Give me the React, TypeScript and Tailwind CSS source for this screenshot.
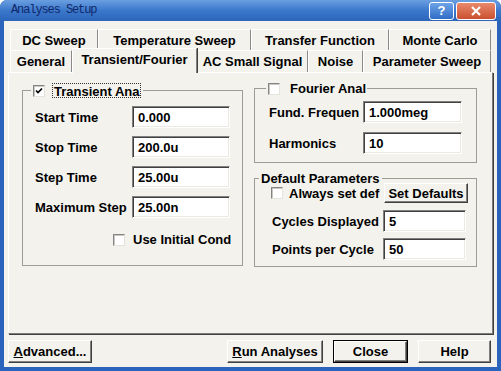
import React from 'react';

// Classic "Analyses Setup" dialog with the Transient/Fourier tab open

const FONT = "font-['Liberation_Sans',Arial,sans-serif]";

function Check({ checked = false }: { checked?: boolean }) {
  return (
    <span className="inline-flex w-[12px] h-[12px] shrink-0 items-center justify-center bg-white border border-t-[#858585] border-l-[#858585] border-r-[#e4e3dc] border-b-[#e4e3dc] shadow-[inset_1px_1px_0_#c9c8c0]">
      {checked && (
        <svg width="8" height="8" viewBox="0 0 8 8">
          <path d="M1 3.5 L3 5.5 L7 1.5" stroke="#000" strokeWidth="1.7" fill="none" />
        </svg>
      )}
    </span>
  );
}

function Field({ value, w }: { value: string; w: string }) {
  return (
    <div
      className={`${w} h-[22px] shrink-0 flex items-center pl-[5px] bg-white border border-t-[#808080] border-l-[#808080] border-r-white border-b-white shadow-[inset_1px_1px_0_#404040,inset_-1px_-1px_0_#ebe9e0]`}
    >
      {value}
    </div>
  );
}

function Row({ label, value, labelW, fieldW }: { label: string; value: string; labelW: string; fieldW: string }) {
  return (
    <div className="flex items-center">
      <div className={`${labelW} shrink-0 overflow-hidden whitespace-nowrap`}>{label}</div>
      <Field value={value} w={fieldW} />
    </div>
  );
}

function Btn({ children, w, isDefault = false }: { children: React.ReactNode; w: string; isDefault?: boolean }) {
  return (
    <div className={`${w} h-[23px] shrink-0 ${isDefault ? 'border border-black' : ''}`}>
      <div className="w-full h-full flex items-center justify-center border border-t-white border-l-white border-r-[#404040] border-b-[#404040] shadow-[inset_-1px_-1px_0_#808080]">
        {children}
      </div>
    </div>
  );
}

function Tab({ label, w, h = 'h-[21px]' }: { label: string; w: string; h?: string }) {
  return (
    <div
      className={`${w} ${h} shrink-0 flex items-center justify-center border-t border-l border-white border-r border-r-[#8a8a8a] whitespace-nowrap`}
    >
      {label}
    </div>
  );
}

function TitleBar() {
  return (
    <div className="h-[21px] shrink-0 flex items-center rounded-t-[7px] bg-gradient-to-b from-[#6a9fe0] via-[#3b78cc] to-[#2c65ba]">
      <span className="pl-[11px] font-['Liberation_Mono',monospace] text-[12px] tracking-[-1.1px] text-[#10296b] font-normal">
        Analyses Setup
      </span>
      <div className="ml-auto mr-[5px] flex gap-[2px]">
        <div className="w-[25px] h-[18px] rounded-[3px] border border-white flex items-center justify-center bg-gradient-to-b from-[#6ea3e6] to-[#2f6cc6] text-white text-[13px] font-bold leading-none">
          ?
        </div>
        <div className="w-[40px] h-[18px] rounded-[3px] border border-white flex items-center justify-center bg-gradient-to-b from-[#e9896c] to-[#c9502e]">
          <svg width="12" height="10" viewBox="0 0 12 10">
            <path d="M2 1 L10 9 M10 1 L2 9" stroke="#fff" strokeWidth="2.2" />
          </svg>
        </div>
      </div>
    </div>
  );
}

export default function App() {
  return (
    <div className={`w-[501px] h-[371px] bg-[#2a63bb] rounded-t-[7px] flex flex-col ${FONT} text-[13px] font-bold text-black leading-[15px]`}>
      <TitleBar />
      <div className="flex-1 mx-[4px] mb-[4px] bg-[#f3f2ed] flex flex-col">
        {/* back row of tabs */}
        <div className="ml-[6px] mt-[8px] flex">
          <Tab label="DC Sweep" w="w-[88px]" />
          <Tab label="Temperature Sweep" w="w-[153px]" />
          <Tab label="Transfer Function" w="w-[138px]" />
          <Tab label="Monte Carlo" w="w-[102px]" />
        </div>
        {/* front row of tabs */}
        <div className="ml-[6px] h-[22px] flex items-end">
          <Tab label="General" w="w-[62px]" h="h-[22px]" />
          <div className="relative z-10 w-[125px] h-[25px] -mb-px shrink-0 flex justify-center pt-[3px] bg-[#f3f2ed] border-t border-l border-white border-r border-r-[#808080] shadow-[1px_0_0_#404040]">
            Transient/Fourier
          </div>
          <Tab label="AC Small Signal" w="w-[111px]" h="h-[22px]" />
          <Tab label="Noise" w="w-[55px]" h="h-[22px]" />
          <Tab label="Parameter Sweep" w="w-[128px]" h="h-[22px]" />
        </div>

        {/* tab page */}
        <div className="mx-[4px] h-[262px] shrink-0 flex gap-[11px] pl-[13px] border border-t-white border-l-white border-r-[#7c7c7c] border-b-[#7c7c7c] shadow-[1px_1px_0_#404040]">
          {/* Transient analysis */}
          <div className="relative mt-[17px] w-[221px] h-[176px] border border-[#9c9c96]">
            <div className="absolute -top-[8px] left-[8px] px-[2px] flex items-center gap-[7px] bg-[#f3f2ed]">
              <Check checked />
              <span className="h-[15px] px-[1px] border border-dotted border-[#333]">Transient Ana</span>
            </div>
            <div className="pt-[15px] pl-[12px] flex flex-col gap-[8px]">
              <Row label="Start Time" value="0.000" labelW="w-[97px]" fieldW="w-[98px]" />
              <Row label="Stop Time" value="200.0u" labelW="w-[97px]" fieldW="w-[98px]" />
              <Row label="Step Time" value="25.00u" labelW="w-[97px]" fieldW="w-[98px]" />
              <Row label="Maximum Step" value="25.00n" labelW="w-[97px]" fieldW="w-[98px]" />
              <div className="ml-[78px] mt-[6px] flex items-center gap-[8px]">
                <Check />
                <span>Use Initial Cond</span>
              </div>
            </div>
          </div>

          <div className="flex flex-col">
            {/* Fourier analysis */}
            <div className="relative mt-[15px] w-[223px] h-[75px] border border-[#9c9c96]">
              <div className="absolute -top-[8px] left-[11px] pl-[2px] pr-[1px] flex items-center gap-[10px] bg-[#f3f2ed]">
                <Check />
                <span>Fourier Anal</span>
              </div>
              <div className="pt-[12px] pl-[14px] flex flex-col gap-[9px]">
                <Row label="Fund. Frequen" value="1.000meg" labelW="w-[94px]" fieldW="w-[99px]" />
                <Row label="Harmonics" value="10" labelW="w-[94px]" fieldW="w-[99px]" />
              </div>
            </div>

            {/* Default parameters */}
            <div className="relative mt-[15px] w-[223px] h-[89px] border border-[#9c9c96]">
              <div className="absolute -top-[8px] left-[4px] px-[2px] bg-[#f3f2ed]">Default Parameters</div>
              <div className="pt-[4px] pl-[16px] flex flex-col">
                <div className="flex items-center">
                  <Check />
                  <div className="w-[95px] ml-[6px] overflow-hidden whitespace-nowrap">Always set def</div>
                  <div className="w-[84px] h-[20px] shrink-0 flex items-center justify-center border border-t-white border-l-white border-r-[#404040] border-b-[#404040] shadow-[inset_-1px_-1px_0_#808080]">
                    Set Defaults
                  </div>
                </div>
                <div className="mt-[7px] flex flex-col gap-[6px]">
                  <Row label="Cycles Displayed" value="5" labelW="w-[112px] pl-[1px]" fieldW="w-[83px]" />
                  <Row label="Points per Cycle" value="50" labelW="w-[112px] pl-[1px]" fieldW="w-[83px]" />
                </div>
              </div>
            </div>
          </div>
        </div>

        {/* dialog buttons */}
        <div className="mx-[4px] mt-[6px] flex">
          <Btn w="w-[84px]">
            <span><span className="underline">A</span>dvanced...</span>
          </Btn>
          <div className="ml-auto flex gap-[10px] mr-[2px]">
            <Btn w="w-[96px]">
              <span><span className="underline">R</span>un Analyses</span>
            </Btn>
            <Btn w="w-[75px]" isDefault>
              Close
            </Btn>
            <Btn w="w-[73px]">Help</Btn>
          </div>
        </div>
      </div>
    </div>
  );
}
